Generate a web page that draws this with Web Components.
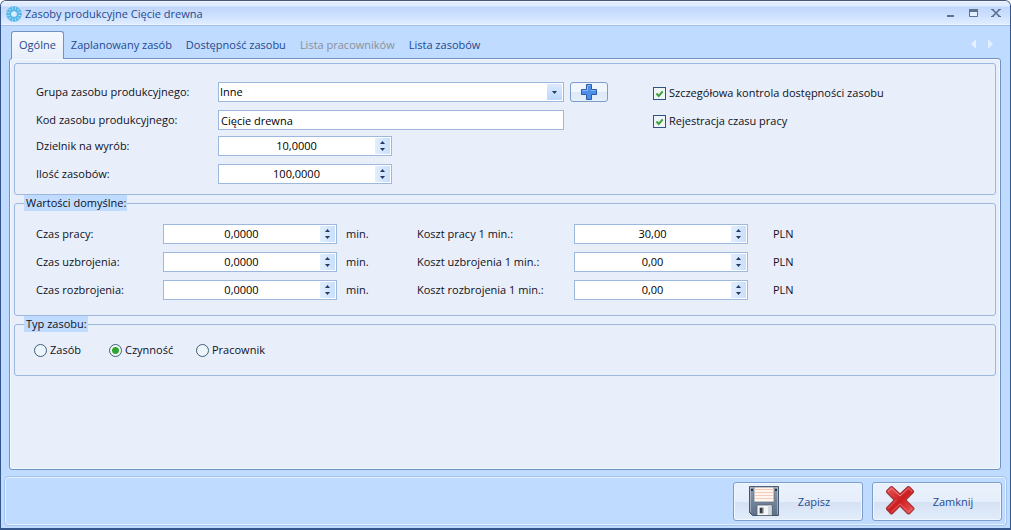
<!DOCTYPE html>
<html lang="pl">
<head>
<meta charset="utf-8">
<title>Zasoby produkcyjne Cięcie drewna</title>
<style>
  html { height: 100%; }
  body {
    margin: 0; min-height: 100%; display: flex;
    font: 11px/16px "Open Sans", "Noto Sans", sans-serif; color: #10101a;
    background: #fff;
    --navy: #1f4a8f; --frame: #bfdbff; --sheet: #e8effa; --edge: #6f93c4; --line: #9db8dd;
  }
  app-window { flex: 1; }
</style>
</head>
<body>
<app-window caption="Zasoby produkcyjne Cięcie drewna">
  <tab-sheet>
    <group-box>
      <two-columns>
        <field-stack slot="start">
          <field-pair>
            <combo-field label="Grupa zasobu produkcyjnego:" value="Inne"></combo-field>
            <text-field label="Kod zasobu produkcyjnego:" value="Cięcie drewna"></text-field>
          </field-pair>
          <field-pair>
            <spin-field label="Dzielnik na wyrób:" value="10,0000"></spin-field>
            <spin-field label="Ilość zasobów:" value="100,0000"></spin-field>
          </field-pair>
        </field-stack>
        <field-pair slot="end">
          <check-field label="Szczegółowa kontrola dostępności zasobu"></check-field>
          <check-field label="Rejestracja czasu pracy"></check-field>
        </field-pair>
      </two-columns>
    </group-box>
    <group-box caption="Wartości domyślne:">
      <value-grid>
        <spin-field class="time" label="Czas pracy:" value="0,0000" unit="min."></spin-field>
        <spin-field class="cost" label="Koszt pracy 1 min.:" value="30,00" unit="PLN"></spin-field>
        <spin-field class="time" label="Czas uzbrojenia:" value="0,0000" unit="min."></spin-field>
        <spin-field class="cost" label="Koszt uzbrojenia 1 min.:" value="0,00" unit="PLN"></spin-field>
        <spin-field class="time" label="Czas rozbrojenia:" value="0,0000" unit="min."></spin-field>
        <spin-field class="cost" label="Koszt rozbrojenia 1 min.:" value="0,00" unit="PLN"></spin-field>
      </value-grid>
    </group-box>
    <group-box caption="Typ zasobu:">
      <type-choice></type-choice>
    </group-box>
  </tab-sheet>
  <action-button slot="actions" label="Zapisz">
    <svg width="32" height="32" viewBox="0 0 32 32" aria-hidden="true">
      <defs><linearGradient id="fd" x1="0" y1="0" x2="0" y2="1"><stop offset="0" stop-color="#8a9bb0"/><stop offset="1" stop-color="#5b7089"/></linearGradient></defs>
      <path d="M2.500 1.500h29v29h-26l-3-3z" fill="url(#fd)" stroke="#45566b"/>
      <path d="M3.500 27V2.500h27v27" fill="none" stroke="#b4c1d0" opacity=".7"/>
      <path d="M7 2h20v15H7z" fill="#fff6f0" stroke="#6b7888" stroke-width=".8"/>
      <path d="M8 4.500h18M8 7.500h18M8 10.500h18M8 13.500h18" stroke="#f6cbbb"/>
      <path d="M4 4h2v2H4zM28 4h2v2h-2z" fill="#2b3440"/>
      <path d="M10 20h15v10.500H10z" fill="#f4f5f6" stroke="#56616e" stroke-width=".8"/>
      <path d="M12.500 22.500h4v6h-4z" fill="#707b87"/><path d="M13 23h2v5h-2z" fill="#333c46"/>
      <path d="M21 20.500h3.500v9.500H21z" fill="#d3d8de"/>
    </svg>
  </action-button>
  <action-button slot="actions" label="Zamknij">
    <svg width="32" height="32" viewBox="0 0 32 32" aria-hidden="true">
      <defs><linearGradient id="cr" x1="0" y1="0" x2="1" y2="1"><stop offset="0" stop-color="#ec5a5c"/><stop offset=".5" stop-color="#cb1f22"/><stop offset="1" stop-color="#f0595b"/></linearGradient></defs>
      <path d="M6.500 1.800 14 8.800 21.500 1.800Q22.500 1.200 23.500 2L27.200 5.600Q28 6.500 27.200 7.500L19.800 15 27.500 22.600Q28.500 23.700 27.500 24.700L23.700 28.500Q22.500 29.500 21.500 28.500L14 21.200 6.500 28.500Q5.500 29.500 4.500 28.500L.8 24.700Q0 23.700.8 22.600L8.200 15 .8 7.500Q0 6.500.8 5.600L4.500 2Q5.500 1.200 6.500 1.800Z" fill="url(#cr)" stroke="#a2383c" stroke-width="1.100" stroke-linejoin="round"/>
      <path d="M2 6.800 5.500 3.200 14 11 22.500 3.200 26 6.500" fill="none" stroke="#f99a9b" opacity=".8"/>
      <path d="M2.200 23.500 10.500 15M26 23.600 22.500 27 14 18.800 5.500 27" fill="none" stroke="#f68587" opacity=".6"/>
    </svg>
  </action-button>
</app-window>

<script>
const define = (name, render) => customElements.define(name, class extends HTMLElement {
  connectedCallback() {
    if (this.shadowRoot) return;
    const t = document.createElement('template');
    t.innerHTML = '<style>*{box-sizing:border-box}:host{box-sizing:border-box}[hidden]{display:none!important}</style>' + render(this);
    this.attachShadow({ mode: 'open' }).append(t.content.cloneNode(true));
  }
});
const at = (el, n) => el.getAttribute(n) || '';

// styles shared by every labelled row
const rowCss = `
  :host { display: block; }
  .row { display: flex; align-items: center; height: 20px; }
  label { flex: none; width: var(--label-width, 182px); white-space: nowrap; }
  input, select {
    font: inherit; color: #000; border: 0; background: #fff; outline: 0; height: 18px; min-width: 0; margin: 0;
  }
  .box { display: flex; height: 20px; border: 1px solid var(--line); background: #fff; }
`;

const spokes = Array.from({ length: 12 }, (_, i) =>
  `<path d="M8 3.500V.300" transform="rotate(${i * 30 + 15} 8 8)" stroke="#9fdcf8" stroke-width="1"/>`).join('');

define('app-window', el => `
<style>
  :host { display: flex; flex-direction: column; background: var(--frame); border: 1px solid #35568c; border-bottom-width: 2px; border-top-color: #4a5578; border-radius: 6px 6px 0 0; overflow: hidden; }
  header { display: flex; align-items: center; height: 25px; padding: 0 6px 0 5px; color: var(--navy);
    background: linear-gradient(#eef5ff 0 1px, #dfecff 1px 5px, #c0d6fb 6px, #cfe2ff 16px, #e0edff 23px, #f4f9ff 24px);
    border-bottom: 1px solid #a3c0ea; }
  h1 { flex: 1; margin: 0; font: inherit; padding-left: 3px; padding-top: 2px; }
  header > svg { margin-top: 2px; }
  nav { display: flex; gap: 7px; }
  nav button { display: grid; place-items: center; width: 16px; height: 16px; padding: 0; border: 0; background: none; }
  main { flex: 1; display: flex; padding: 0 9px 0 8px; }
  main ::slotted(*) { flex: 1; }
  footer { display: flex; justify-content: flex-end; gap: 9px; margin: 6px 3px 2px; padding: 5px 4px 4px; border: 1px solid #a5c3ee; border-radius: 4px; box-shadow: inset 0 0 0 1px #e6f1ff; }
</style>
<header>
  <svg width="16" height="16" viewBox="0 0 16 16" aria-hidden="true"><circle cx="8" cy="8" r="5.300" fill="none" stroke="#55b5e8" stroke-width="5"/>${spokes}<circle cx="8" cy="8" r="2.600" fill="#d9f1fd"/></svg>
  <h1>${at(el, 'caption')}</h1>
  <nav>
    <button aria-label="Minimalizuj"><svg width="16" height="16"><path d="M5 10h7v2H5z" fill="#5d7191"/></svg></button>
    <button aria-label="Maksymalizuj"><svg width="16" height="16"><path d="M4.500 4.500h8v7h-8z" fill="#e6efff" stroke="#5d7191"/><path d="M4 4h9v3H4z" fill="#5d7191"/></svg></button>
    <button aria-label="Zamknij okno"><svg width="16" height="16"><path d="M4.500 4.500 11.500 11.500M11.500 4.500 4.500 11.500" stroke="#5d7191" stroke-width="1.700"/><path d="M3 4.500h3M10 4.500h3M3 11.500h3M10 11.500h3" stroke="#5d7191"/></svg></button>
  </nav>
</header>
<main><slot></slot></main>
<footer><slot name="actions"></slot></footer>`);

define('tab-sheet', () => `
<style>
  :host { display: flex; flex-direction: column; }
  .tabs { display: flex; align-items: flex-end; height: 32px; padding: 0 6px 0 2px; }
  .tabs button { height: 28px; padding: 0 6px; border: 1px solid transparent; border-bottom: 0; background: none; font: inherit; color: var(--navy); white-space: nowrap; }
  .tabs button[aria-selected=true] { margin-bottom: -1px; padding: 0 7px 2px; border-color: var(--edge); border-radius: 3px 3px 0 0;
    background: linear-gradient(#f4f8fe, var(--sheet)); position: relative; }
  .tabs button:disabled { color: #8b8f99; }
  .arrows { margin-left: auto; align-self: center; height: 16px; padding-top: 4px; }
  .sheet { flex: 1; display: flex; flex-direction: column; gap: 8px; padding: 4px;
    background: var(--sheet); border: 1px solid var(--edge); border-radius: 3px; box-shadow: inset 0 0 0 1px #f2f8ff; }
</style>
<div class="tabs" role="tablist">
  <button role="tab" aria-selected="true">Ogólne</button>
  <button role="tab">Zaplanowany zasób</button>
  <button role="tab">Dostępność zasobu</button>
  <button role="tab" disabled>Lista pracowników</button>
  <button role="tab">Lista zasobów</button>
  <svg class="arrows" width="28" height="12" viewBox="0 0 28 12" aria-hidden="true"><path d="M9 1v10L4 6zM21 1v10l5-5z" fill="#e4efff"/></svg>
</div>
<div class="sheet" role="tabpanel"><slot></slot></div>`);

define('group-box', el => `
<style>
  :host { display: block; }
  section { position: relative; border: 1px solid var(--line); border-radius: 3px; padding: 18px 21px 10px; }
  section.titled { padding: 20px 21px 15px; }
  h2 { position: absolute; left: 9px; top: -9px; margin: 0; padding: 0 1px 0 2px; font: inherit; background: var(--frame); }
</style>
<section class="${at(el, 'caption') ? 'titled' : ''}">
  <h2 ${at(el, 'caption') ? '' : 'hidden'}>${at(el, 'caption')}</h2><slot></slot>
</section>`);

define('two-columns', () => `
<style>:host { display: flex; gap: 45px; } ::slotted(*) { flex: none; }</style>
<slot name="start"></slot><slot name="end"></slot>`);

define('field-stack', () => `<style>:host { display: flex; flex-direction: column; gap: 6px; }</style><slot></slot>`);
define('field-pair', () => `<style>:host { display: flex; flex-direction: column; gap: 8px; }</style><slot></slot>`);

define('value-grid', () => `
<style>
  :host { display: grid; grid-template-columns: 381px 1fr; row-gap: 8px; }
  ::slotted(.time) { --label-width: 127px; --unit-gap: 9px; }
  ::slotted(.cost) { --label-width: 157px; --unit-gap: 25px; }
</style><slot></slot>`);

define('combo-field', el => `
<style>${rowCss}
  .box { position: relative; width: 346px; margin-right: 6px; }
  select { appearance: none; width: 100%; padding: 0 18px 0 1px; }
  .box svg { position: absolute; right: 1px; top: 1px; pointer-events: none; background: linear-gradient(#dceaff, #bcd7fb); }
  button { display: grid; place-items: center; width: 38px; height: 20px; padding: 0; border: 1px solid #7d9cc9; border-radius: 3px; background: linear-gradient(#f0f6ff 50%, #dbe8f8 50%, #e6f0fc); }
</style>
<div class="row">
  <label for="c">${at(el, 'label')}</label>
  <div class="box">
    <select id="c"><option>${at(el, 'value')}</option></select>
    <svg width="15" height="16" aria-hidden="true"><path d="M5 7h5L7.500 10z" fill="#23395f"/></svg>
  </div>
  <button aria-label="Dodaj grupę"><svg width="16" height="16"><path d="M5.500 .500h5v5h5v5h-5v5h-5v-5h-5v-5h5z" fill="#4d8fe6" stroke="#2a5cab"/><path d="M6.500 1.500h3M1.500 6.500h5v-4M10 6.500h4.500" fill="none" stroke="#8dbcf7"/></svg></button>
</div>`);

define('text-field', el => `
<style>${rowCss} .box { width: 346px; } input { flex: 1; padding: 0 2px; }</style>
<div class="row"><label for="t">${at(el, 'label')}</label><div class="box"><input id="t" type="text" value="${at(el, 'value')}"></div></div>`);

define('spin-field', el => `
<style>${rowCss}
  .box { width: 174px; padding-right: 1px; }
  input { flex: 1; text-align: center; padding: 0 1px 1px 0; }
  .steps { display: flex; flex-direction: column; width: 15px; margin: 1px 0; background: linear-gradient(90deg, #e2eeff, #c9dffc); }
  .steps button { display: grid; place-items: center; flex: 1; padding: 0; border: 0; background: none; }
  .unit { margin-left: var(--unit-gap, 0); }
</style>
<div class="row">
  <label for="s">${at(el, 'label')}</label>
  <div class="box">
    <input id="s" type="text" inputmode="decimal" value="${at(el, 'value')}">
    <div class="steps">
      <button aria-label="Zwiększ"><svg width="15" height="8"><path d="M5 6h5L7.500 3z" fill="#23395f"/></svg></button>
      <button aria-label="Zmniejsz"><svg width="15" height="8"><path d="M5 2h5L7.500 5z" fill="#23395f"/></svg></button>
    </div>
  </div>
  <span class="unit" ${at(el, 'unit') ? '' : 'hidden'}>${at(el, 'unit')}</span>
</div>`);

define('check-field', el => `
<style>
  :host { display: block; }
  label { display: flex; align-items: center; gap: 3px; height: 20px; padding-top: 2px; white-space: nowrap; }
  input { appearance: none; flex: none; width: 13px; height: 13px; margin: 0; border: 1px solid #2f5286;
    background: #eef5f4; }
  input:checked { background: #eef5f4 url("data:image/svg+xml,%3Csvg xmlns='http://www.w3.org/2000/svg' width='11' height='11'%3E%3Cpath d='M2.500 5.500 4.700 8 8.700 3.300' fill='none' stroke='%233fa03f' stroke-width='2'/%3E%3C/svg%3E") center no-repeat; }
</style>
<label><input type="checkbox" checked><span>${at(el, 'label')}</span></label>`);

define('type-choice', () => `
<style>
  :host { display: flex; margin: -4px -2px 1px; }
  label { display: flex; align-items: center; gap: 3px; height: 18px; white-space: nowrap; }
  label:nth-of-type(1) { width: 75px; }
  label:nth-of-type(2) { width: 87px; }
  input { appearance: none; flex: none; width: 13px; height: 13px; margin: 0; border: 1px solid #3d5f7c; border-radius: 50%; background: #eef5fa; }
  input:checked { background: radial-gradient(circle, #2fa62f 0 3px, #f2faf2 4px); }
</style>
<label><input type="radio" name="type"><span>Zasób</span></label>
<label><input type="radio" name="type" checked><span>Czynność</span></label>
<label><input type="radio" name="type"><span>Pracownik</span></label>`);

define('action-button', el => `
<style>
  :host { display: block; }
  button { display: flex; align-items: center; width: 130px; height: 39px; padding: 0 13px; border: 1px solid #7d9dcc; border-radius: 3px; font: inherit; color: var(--navy);
    background: linear-gradient(#e9f1fc, #e5eefa 50%, #d5e2f4 50%, #e2ecfa); box-shadow: inset 0 0 0 1px #f0f6ff; }
  span { flex: 1; text-align: center; }
  ::slotted(svg) { display: block; margin-top: -2px; }
</style>
<button><slot></slot><span>${at(el, 'label')}</span></button>`);
</script>
</body>
</html>
